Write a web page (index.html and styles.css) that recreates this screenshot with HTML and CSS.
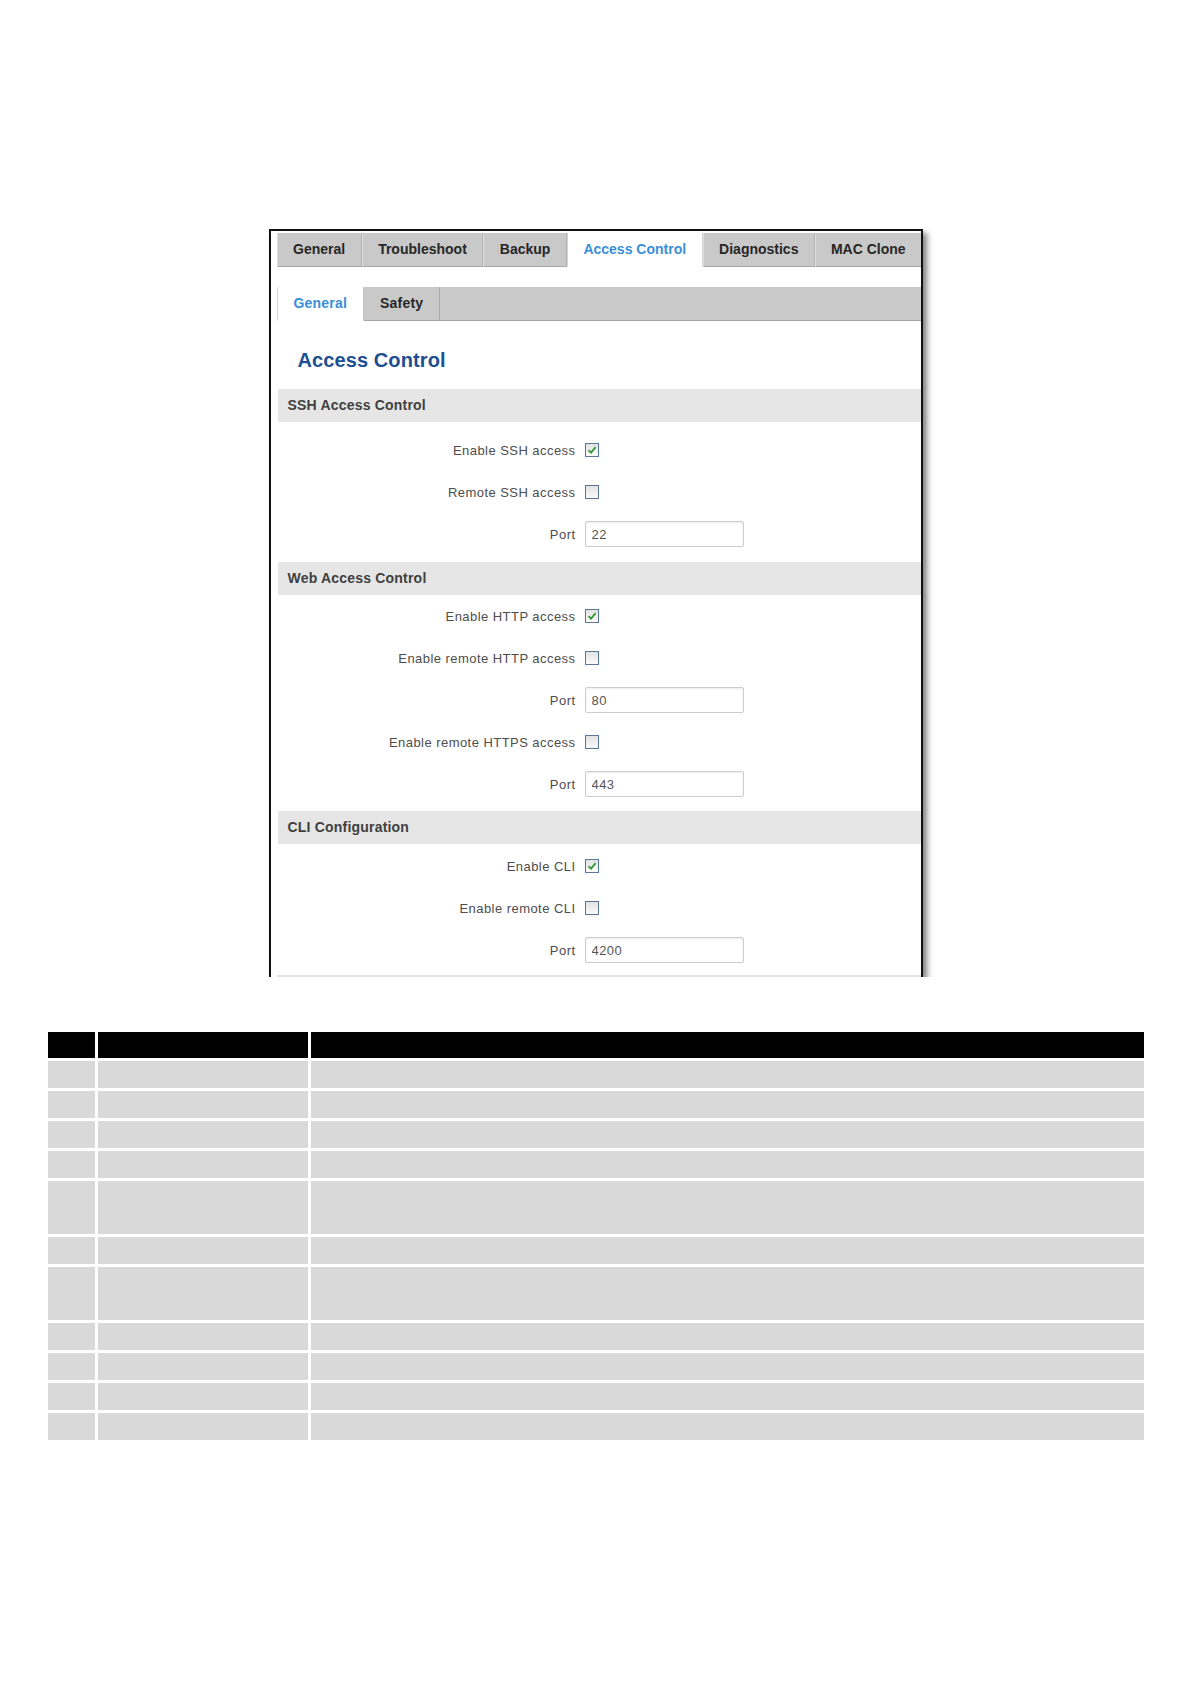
FILE: index.html
```html
<!DOCTYPE html>
<html lang="en">
<head>
    <meta charset="UTF-8">
    <title>Access Control</title>
    <link rel="stylesheet" href="styles.css">
</head>
<body>
    <div class="shot-wrap">
        <div class="shot">
            <ul class="tabs">
                <li>General</li>
                <li>Troubleshoot</li>
                <li>Backup</li>
                <li class="active">Access Control</li>
                <li>Diagnostics</li>
                <li class="last">MAC Clone</li>
            </ul>
            <ul class="tabs sub">
                <li class="active">General</li>
                <li>Safety</li>
            </ul>

            <h2 class="page-title">Access Control</h2>

            <div class="section">
                <div class="section-head">SSH Access Control</div>
                <div class="section-body ssh">
                    <div class="row"><label>Enable SSH access</label><span class="cb"><svg width="10" height="10" viewBox="0 0 10 10"><path d="M1.5 5.2 L4 7.6 L8.6 2.2" fill="none" stroke="#2f9a35" stroke-width="1.8"/></svg></span></div>
                    <div class="row"><label>Remote SSH access</label><span class="cb"></span></div>
                    <div class="row"><label>Port</label><input class="port" type="text" value="22"></div>
                </div>
            </div>

            <div class="section">
                <div class="section-head">Web Access Control</div>
                <div class="section-body">
                    <div class="row"><label>Enable HTTP access</label><span class="cb"><svg width="10" height="10" viewBox="0 0 10 10"><path d="M1.5 5.2 L4 7.6 L8.6 2.2" fill="none" stroke="#2f9a35" stroke-width="1.8"/></svg></span></div>
                    <div class="row"><label>Enable remote HTTP access</label><span class="cb"></span></div>
                    <div class="row"><label>Port</label><input class="port" type="text" value="80"></div>
                    <div class="row"><label>Enable remote HTTPS access</label><span class="cb"></span></div>
                    <div class="row"><label>Port</label><input class="port" type="text" value="443"></div>
                </div>
            </div>

            <div class="section">
                <div class="section-head">CLI Configuration</div>
                <div class="section-body cli">
                    <div class="row"><label>Enable CLI</label><span class="cb"><svg width="10" height="10" viewBox="0 0 10 10"><path d="M1.5 5.2 L4 7.6 L8.6 2.2" fill="none" stroke="#2f9a35" stroke-width="1.8"/></svg></span></div>
                    <div class="row"><label>Enable remote CLI</label><span class="cb"></span></div>
                    <div class="row"><label>Port</label><input class="port" type="text" value="4200"></div>
                </div>
            </div>
        </div>
    </div>

    <table class="params">
        <thead>
            <tr><th class="c1"></th><th class="c2"></th><th class="c3"></th></tr>
        </thead>
        <tbody>
            <tr><td></td><td></td><td></td></tr>
            <tr><td></td><td></td><td></td></tr>
            <tr><td></td><td></td><td></td></tr>
            <tr><td></td><td></td><td></td></tr>
            <tr class="tall"><td></td><td></td><td></td></tr>
            <tr><td></td><td></td><td></td></tr>
            <tr class="tall"><td></td><td></td><td></td></tr>
            <tr><td></td><td></td><td></td></tr>
            <tr><td></td><td></td><td></td></tr>
            <tr><td></td><td></td><td></td></tr>
            <tr><td></td><td></td><td></td></tr>
        </tbody>
    </table>
</body>
</html>
```

FILE: styles.css
```css
body {
    margin: 0;
    background: #fff;
    font-family: "Liberation Sans", Arial, sans-serif;
}
.shot-wrap {
    width: 654px;
    margin: 229px auto 0;
    padding: 0 12px;
    overflow: hidden;
}
.shot {
    border: 2px solid #111;
    border-bottom: none;
    padding: 2px 0 0 6px;
    background: #fff;
    box-shadow: 4px 4px 6px rgba(0,0,0,0.5);
}
.tabs {
    display: flex;
    margin: 0;
    padding: 0;
    list-style: none;
    height: 34px;
    overflow: hidden;
    background: #c9c9c9;
    box-shadow: inset 0 -1px #a6a6a6;
}
.tabs li {
    flex: none;
    padding: 0 15.5px;
    line-height: 33px;
    height: 33px;
    border-left: 1px solid #dedede;
    border-right: 1px solid #b2b2b2;
    border-bottom: 1px solid #a6a6a6;
    font-size: 14px;
    font-weight: bold;
    color: #262626;
    white-space: nowrap;
}
.tabs li.last {
    flex: 1;
    padding: 0;
    text-align: center;
    border-right: none;
}
.tabs li.active {
    background: #fff;
    color: #3a8ed8;
    border-left-color: #d4d4d4;
    border-right-color: #d4d4d4;
    border-bottom-color: #fff;
}
.tabs.sub {
    margin-top: 20px;
}
.tabs.sub li {
    padding: 0 16px;
    border-left: none;
    border-right: 1px solid #a9a9a9;
    letter-spacing: 0.2px;
}
.tabs.sub li.active {
    border-left: 1px solid #d4d4d4;
    border-right-color: #c4c4c4;
}
.page-title {
    margin: 27px 0 17px;
    padding-left: 21px;
    font-size: 20px;
    line-height: 24px;
    font-weight: bold;
    letter-spacing: 0.1px;
    color: #1d4f92;
}
.section-head {
    height: 33px;
    line-height: 33px;
    margin-left: 1px;
    padding-left: 10px;
    background: #e6e6e6;
    font-size: 14px;
    font-weight: bold;
    letter-spacing: 0.2px;
    color: #3f3f3f;
}
.section-body {
    padding: 0 0 6px;
}
.section-body.ssh {
    padding: 7px 0;
}
.section-body.cli {
    padding: 1px 0 4px;
    border-bottom: 2px solid #e2e2e2;
}
.row {
    display: grid;
    grid-template-columns: 299px 1fr;
    column-gap: 9px;
    align-items: center;
    height: 42px;
}
.row label {
    text-align: right;
    font-size: 13px;
    letter-spacing: 0.45px;
    color: #4d4d4d;
}
.cb {
    display: flex;
    align-items: center;
    justify-content: center;
    width: 14px;
    height: 14px;
    box-sizing: border-box;
    border: 1px solid #587898;
    background: linear-gradient(#e2e2e2, #fbfbfb);
}
.port {
    width: 159px;
    height: 26px;
    box-sizing: border-box;
    margin: 0;
    padding: 0 6px;
    border: 1px solid #cdcdcd;
    border-radius: 2px;
    box-shadow: inset 0 1px 2px rgba(0,0,0,0.08);
    font: 13px "Liberation Sans", Arial, sans-serif;
    letter-spacing: 0.4px;
    color: #555;
}
.params {
    width: 1102px;
    margin: 52px auto 0;
    border-spacing: 3px;
    table-layout: fixed;
}
.params th {
    height: 26px;
    padding: 0;
    background: #000;
}
.params th.c1 { width: 47px; }
.params th.c2 { width: 210px; }
.params td {
    height: 27px;
    padding: 0;
    background: #d9d9d9;
}
.params tr.tall td {
    height: 53px;
}
```
